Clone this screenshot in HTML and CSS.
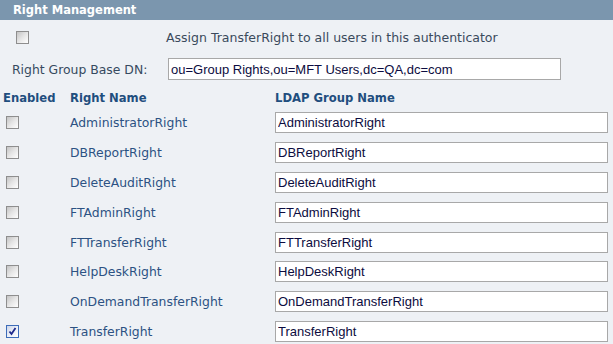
FILE: index.html
```html
<!DOCTYPE html>
<html>
<head>
<meta charset="utf-8">
<link rel="stylesheet" href="styles.css">
</head>
<body>
<div class="panel">
  <div class="titlebar">Right Management</div>
  <div class="assign">
    <span class="cb"></span>
    <span class="assign-text">Assign TransferRight to all users in this authenticator</span>
  </div>
  <div class="basedn">
    <span class="label">Right Group Base DN:</span>
    <input class="field dn" type="text" value="ou=Group Rights,ou=MFT Users,dc=QA,dc=com">
  </div>
  <div class="grid">
    <div class="colhead">Enabled</div>
    <div class="colhead">Right Name</div>
    <div class="colhead">LDAP Group Name</div>

    <div class="cell"><span class="cb"></span></div>
    <div class="cell name">AdministratorRight</div>
    <div class="cell"><input class="field ldap" type="text" value="AdministratorRight"></div>

    <div class="cell"><span class="cb"></span></div>
    <div class="cell name">DBReportRight</div>
    <div class="cell"><input class="field ldap" type="text" value="DBReportRight"></div>

    <div class="cell"><span class="cb"></span></div>
    <div class="cell name">DeleteAuditRight</div>
    <div class="cell"><input class="field ldap" type="text" value="DeleteAuditRight"></div>

    <div class="cell"><span class="cb"></span></div>
    <div class="cell name">FTAdminRight</div>
    <div class="cell"><input class="field ldap" type="text" value="FTAdminRight"></div>

    <div class="cell"><span class="cb"></span></div>
    <div class="cell name">FTTransferRight</div>
    <div class="cell"><input class="field ldap" type="text" value="FTTransferRight"></div>

    <div class="cell"><span class="cb"></span></div>
    <div class="cell name">HelpDeskRight</div>
    <div class="cell"><input class="field ldap" type="text" value="HelpDeskRight"></div>

    <div class="cell"><span class="cb"></span></div>
    <div class="cell name">OnDemandTransferRight</div>
    <div class="cell"><input class="field ldap" type="text" value="OnDemandTransferRight"></div>

    <div class="cell"><span class="cb on"><svg width="11" height="11" viewBox="0 0 11 11"><path d="M2.5 5.5 L4.5 8 L8.5 2" fill="none" stroke="#1e2a8c" stroke-width="1.8"/></svg></span></div>
    <div class="cell name">TransferRight</div>
    <div class="cell"><input class="field ldap" type="text" value="TransferRight"></div>
  </div>
</div>
</body>
</html>
```

FILE: styles.css
```css
html, body {
  margin: 0;
  padding: 0;
  background: #eef1f5;
}
body {
  font-family: "DejaVu Sans", Verdana, sans-serif;
  font-size: 12.5px;
  color: #3a4a5c;
  width: 613px;
  height: 344px;
  overflow: hidden;
}
.titlebar {
  height: 20px;
  line-height: 20px;
  background: #7b96ae;
  color: #ffffff;
  font-weight: bold;
  font-size: 11.5px;
  padding-left: 13px;
}
.assign {
  height: 34px;
  display: grid;
  grid-template-columns: 166px 1fr;
  align-items: center;
}
.assign .cb {
  margin-left: 16px;
}
.assign-text {
  color: #3a4a5c;
}
.basedn {
  height: 30px;
  display: grid;
  grid-template-columns: 168px 1fr;
  align-items: center;
}
.label {
  padding-left: 12px;
  color: #364a60;
  font-size: 12.4px;
}
.field {
  box-sizing: border-box;
  margin: 0;
  border: 1px solid #a8a8a8;
  background: #ffffff;
  font-family: "Liberation Sans", Arial, sans-serif;
  font-size: 13px;
  color: #0c0c40;
  padding: 0 2px;
  outline: none;
}
.dn {
  width: 393px;
  height: 22px;
}
.grid {
  display: grid;
  grid-template-columns: 70px 205px 333px;
  grid-template-rows: 28px;
  grid-auto-rows: 29.9px;
  align-items: start;
}
.colhead {
  font-weight: bold;
  font-size: 11.6px;
  color: #1f4e7e;
  align-self: center;
  padding-left: 3px;
}
.colhead:nth-child(2) {
  padding-left: 0;
}
.colhead:nth-child(3) {
  padding-left: 0;
}
.cell {
  height: 21px;
  display: flex;
  align-items: center;
}
.cell .cb {
  margin-left: 6px;
}
.name {
  color: #2c5283;
  line-height: 21px;
  font-size: 12.4px;
}
.ldap {
  width: 333px;
  height: 21px;
}
.cb {
  box-sizing: border-box;
  display: inline-flex;
  align-items: center;
  justify-content: center;
  width: 13px;
  height: 13px;
  border: 1px solid #8e8e8e;
  background: linear-gradient(135deg, #c4c4c4 0%, #e6e6e6 50%, #ffffff 100%);
}
.cb.on {
  border-color: #3d6cb8;
  background: linear-gradient(135deg, #cdd6ea 0%, #eaeff7 50%, #ffffff 100%);
}
.cb svg {
  display: block;
}
```
